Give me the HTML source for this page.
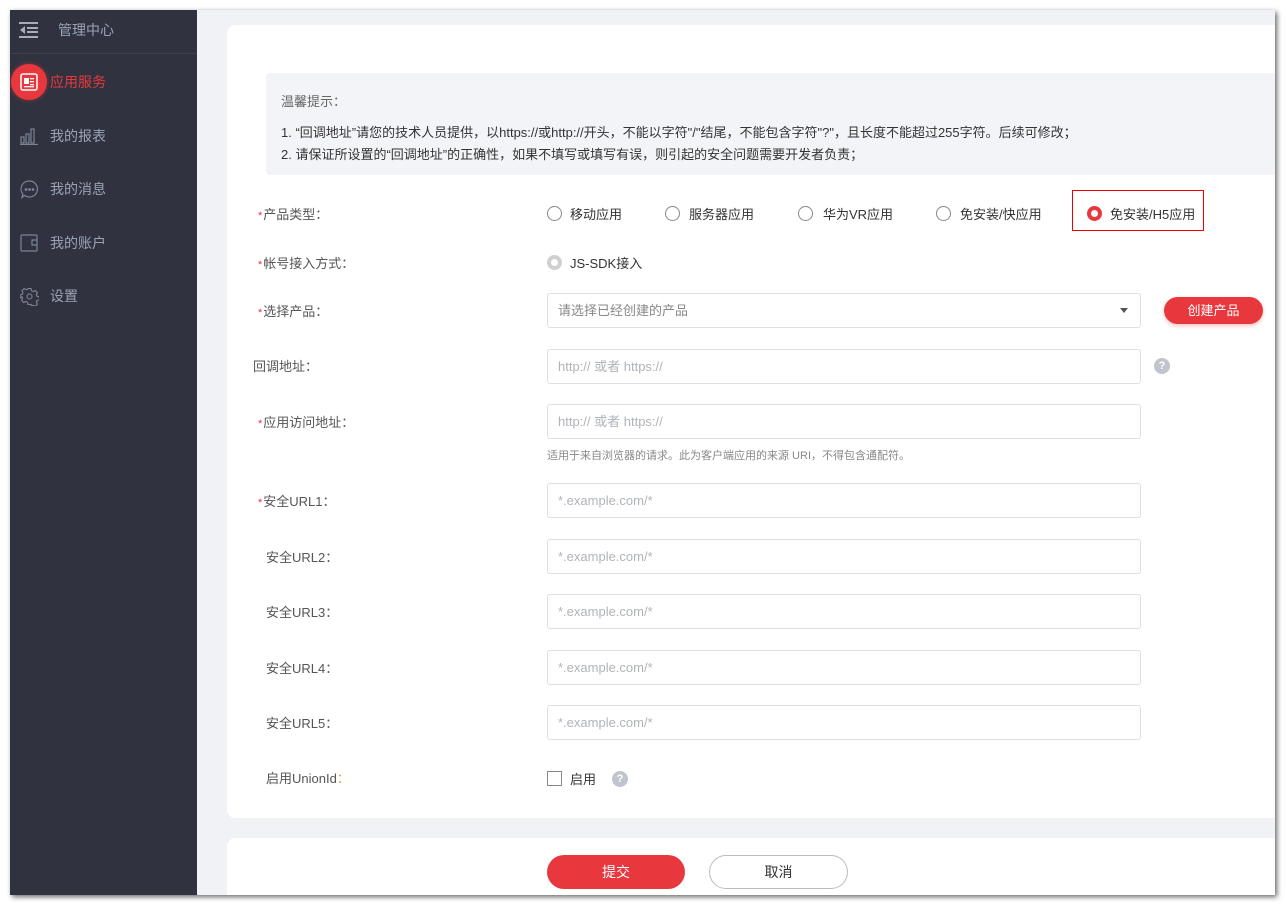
<!DOCTYPE html>
<html><head><meta charset="utf-8"><style>
*{box-sizing:border-box;margin:0;padding:0}
body{width:1286px;height:906px;background:#fff;font-family:"Liberation Sans","Noto Sans CJK SC",sans-serif;font-size:13px;color:#555;position:relative;overflow:hidden}
#win{position:absolute;left:10px;top:10px;width:1265px;height:885px;background:#f0f2f5;overflow:hidden;box-shadow:2px 2px 5px rgba(0,0,0,.6)}
#side{position:absolute;left:0;top:0;width:187px;height:885px;background:#30333f}
.a{position:absolute;white-space:nowrap}
.nav{position:absolute;left:40px;font-size:14px;color:#9aa3b4}
.card{position:absolute;left:217px;background:#fff;border-radius:8px;width:1100px}
.lbl{position:absolute;left:248px;font-size:13px;color:#555}
.lbl i{color:#e8383d;font-style:normal;font-size:11px;margin-right:1px}
.inp{position:absolute;left:537px;width:594px;height:35px;border:1px solid #dcdfe6;border-radius:3px;background:#fff;color:#b0b3b9;font-size:13px;padding-left:10px;line-height:33px}
.rad{position:absolute;width:15px;height:15px;border:1px solid #888;border-radius:50%;background:#fff}
.rt{position:absolute;font-size:13px;color:#333}
.q{position:absolute;width:16px;height:16px;border-radius:50%;background:#c0c4cc;color:#fff;font-size:11px;font-weight:bold;text-align:center;line-height:16px}
</style></head><body>
<div id="win">
<div id="side">
 <svg class="a" style="left:9px;top:12px" width="20" height="16" viewBox="0 0 20 16"><rect x="0" y="0" width="19" height="2" fill="#a7adba"/><rect x="8" y="5" width="11" height="2" fill="#a7adba"/><rect x="8" y="9" width="11" height="2" fill="#a7adba"/><rect x="0" y="14" width="19" height="2" fill="#a7adba"/><path d="M6 4 L1 8 L6 12Z" fill="#a7adba"/></svg>
 <div class="a" style="left:48px;top:10px;font-size:14px;color:#9aa3b4">管理中心</div>
 <div class="a" style="left:0;top:43px;width:187px;height:1px;background:#3d404b"></div>
 <div class="a" style="left:1px;top:54px;width:36px;height:36px;border-radius:50%;background:#e8383d;box-shadow:0 0 4px rgba(232,56,61,.6)"></div>
 <svg class="a" style="left:10px;top:63px" width="18" height="18" viewBox="0 0 18 18"><rect x="1" y="1" width="16" height="16" rx="2" fill="none" stroke="#fff" stroke-width="1.5"/><rect x="4" y="5" width="5" height="6" fill="#fff"/><rect x="10" y="5" width="4" height="1.3" fill="#fff"/><rect x="10" y="8" width="4" height="1.3" fill="#fff"/><rect x="10" y="11" width="4" height="1.3" fill="#fff"/><rect x="4" y="13" width="10" height="1.3" fill="#fff"/></svg>
 <div class="nav" style="top:62px;color:#e8383d">应用服务</div>
 <svg class="a" style="left:10px;top:117px" width="18" height="18" viewBox="0 0 18 18" fill="none" stroke="#7b8394" stroke-width="1.2"><rect x="1" y="10" width="3" height="6"/><rect x="6" y="7" width="3" height="9"/><rect x="11" y="2" width="3" height="14"/><path d="M0 17.5H18"/></svg>
 <div class="nav" style="top:116px">我的报表</div>
 <svg class="a" style="left:10px;top:170px" width="19" height="19" viewBox="0 0 19 19" fill="none" stroke="#7b8394" stroke-width="1.2"><path d="M9.5 1a8 8 0 1 1-5 14.3L2 17.5l.8-3.5A8 8 0 0 1 9.5 1z"/><circle cx="6" cy="9.5" r=".8" fill="#7b8394"/><circle cx="9.5" cy="9.5" r=".8" fill="#7b8394"/><circle cx="13" cy="9.5" r=".8" fill="#7b8394"/></svg>
 <div class="nav" style="top:169px">我的消息</div>
 <svg class="a" style="left:10px;top:224px" width="19" height="18" viewBox="0 0 19 18" fill="none" stroke="#7b8394" stroke-width="1.2"><rect x="1" y="1" width="16" height="16" rx="1"/><path d="M17 6h-5v5h5"/></svg>
 <div class="nav" style="top:223px">我的账户</div>
 <svg class="a" style="left:10px;top:277px" width="19" height="19" viewBox="0 0 24 24" fill="none" stroke="#7b8394" stroke-width="1.4"><circle cx="12" cy="12" r="3.2"/><path d="M10 2h4l.6 2.8 2 1 2.6-1.4 2.8 2.8-1.4 2.6 1 2 2.8.6v4l-2.8.6-1 2 1.4 2.6-2.8 2.8-2.6-1.4-2 1L14 22h-4l-.6-2.8-2-1-2.6 1.4-2.8-2.8 1.4-2.6-1-2L0 14v-4l2.8-.6 1-2L2.4 4.8l2.8-2.8 2.6 1.4 2-1z"/></svg>
 <div class="nav" style="top:276px">设置</div>
</div>

<div class="card" style="top:15px;height:793px"></div>
<div class="a" style="left:256px;top:63px;width:1020px;height:102px;background:#f3f4f7;border-radius:4px"></div>
<div class="a" style="left:271px;top:81px;font-size:13px;color:#666">温馨提示：</div>
<div class="a" style="left:271px;top:112px;font-size:13px;color:#333">1. “回调地址”请您的技术人员提供，以https://或http://开头，不能以字符"/"结尾，不能包含字符"?"，且长度不能超过255字符。后续可修改；</div>
<div class="a" style="left:271px;top:134px;font-size:13px;color:#333">2. 请保证所设置的“回调地址”的正确性，如果不填写或填写有误，则引起的安全问题需要开发者负责；</div>

<div class="lbl" style="top:194px"><i>*</i>产品类型：</div>
<div class="rad" style="left:537px;top:196px"></div><div class="rt" style="left:560px;top:194px">移动应用</div>
<div class="rad" style="left:655px;top:196px"></div><div class="rt" style="left:679px;top:194px">服务器应用</div>
<div class="rad" style="left:788px;top:196px"></div><div class="rt" style="left:813px;top:194px">华为VR应用</div>
<div class="rad" style="left:926px;top:196px"></div><div class="rt" style="left:950px;top:194px">免安装/快应用</div>
<div class="a" style="left:1062px;top:180px;width:132px;height:41px;border:1px solid #e00"></div>
<div class="rad" style="left:1077px;top:196px;border:4px solid #e8383d"></div><div class="rt" style="left:1100px;top:194px">免安装/H5应用</div>

<div class="lbl" style="top:243px"><i>*</i>帐号接入方式：</div>
<div class="rad" style="left:537px;top:245px;border:4px solid #d0d0d0"></div><div class="rt" style="left:560px;top:243px">JS-SDK接入</div>

<div class="lbl" style="top:291px"><i>*</i>选择产品：</div>
<div class="inp" style="top:283px;color:#888">请选择已经创建的产品</div>
<div class="a" style="left:1110px;top:298px;width:0;height:0;border-left:4px solid transparent;border-right:4px solid transparent;border-top:5px solid #555"></div>
<div class="a" style="left:1154px;top:287px;width:99px;height:27px;border-radius:14px;background:#e8383d;color:#fff;font-size:13px;text-align:center;line-height:27px;box-shadow:0 2px 4px rgba(232,56,61,.3)">创建产品</div>

<div class="lbl" style="top:346px;left:243px">回调地址：</div>
<div class="inp" style="top:339px">http:// 或者 https://</div>
<div class="q" style="left:1144px;top:348px">?</div>

<div class="lbl" style="top:402px"><i>*</i>应用访问地址：</div>
<div class="inp" style="top:394px">http:// 或者 https://</div>
<div class="a" style="left:537px;top:437px;font-size:11px;color:#888">适用于来自浏览器的请求。此为客户端应用的来源 URI，不得包含通配符。</div>

<div class="lbl" style="top:481px"><i>*</i>安全URL1：</div>
<div class="inp" style="top:473px">*.example.com/*</div>
<div class="lbl" style="top:537px;left:256px">安全URL2：</div>
<div class="inp" style="top:529px">*.example.com/*</div>
<div class="lbl" style="top:592px;left:256px">安全URL3：</div>
<div class="inp" style="top:584px">*.example.com/*</div>
<div class="lbl" style="top:648px;left:256px">安全URL4：</div>
<div class="inp" style="top:640px">*.example.com/*</div>
<div class="lbl" style="top:703px;left:256px">安全URL5：</div>
<div class="inp" style="top:695px">*.example.com/*</div>

<div class="lbl" style="top:758px;left:256px">启用UnionId<span style="color:#e8a040">：</span></div>
<div class="a" style="left:537px;top:761px;width:15px;height:15px;border:1px solid #888;background:#fff"></div>
<div class="rt" style="left:560px;top:759px">启用</div>
<div class="q" style="left:602px;top:761px">?</div>

<div class="card" style="top:828px;height:80px"></div>
<div class="a" style="left:537px;top:845px;width:138px;height:34px;border-radius:17px;background:#e8383d;color:#fff;font-size:14px;text-align:center;line-height:34px">提交</div>
<div class="a" style="left:699px;top:845px;width:139px;height:34px;border-radius:17px;border:1px solid #bbb;background:#fff;color:#333;font-size:14px;text-align:center;line-height:32px">取消</div>
</div>
</body></html>
